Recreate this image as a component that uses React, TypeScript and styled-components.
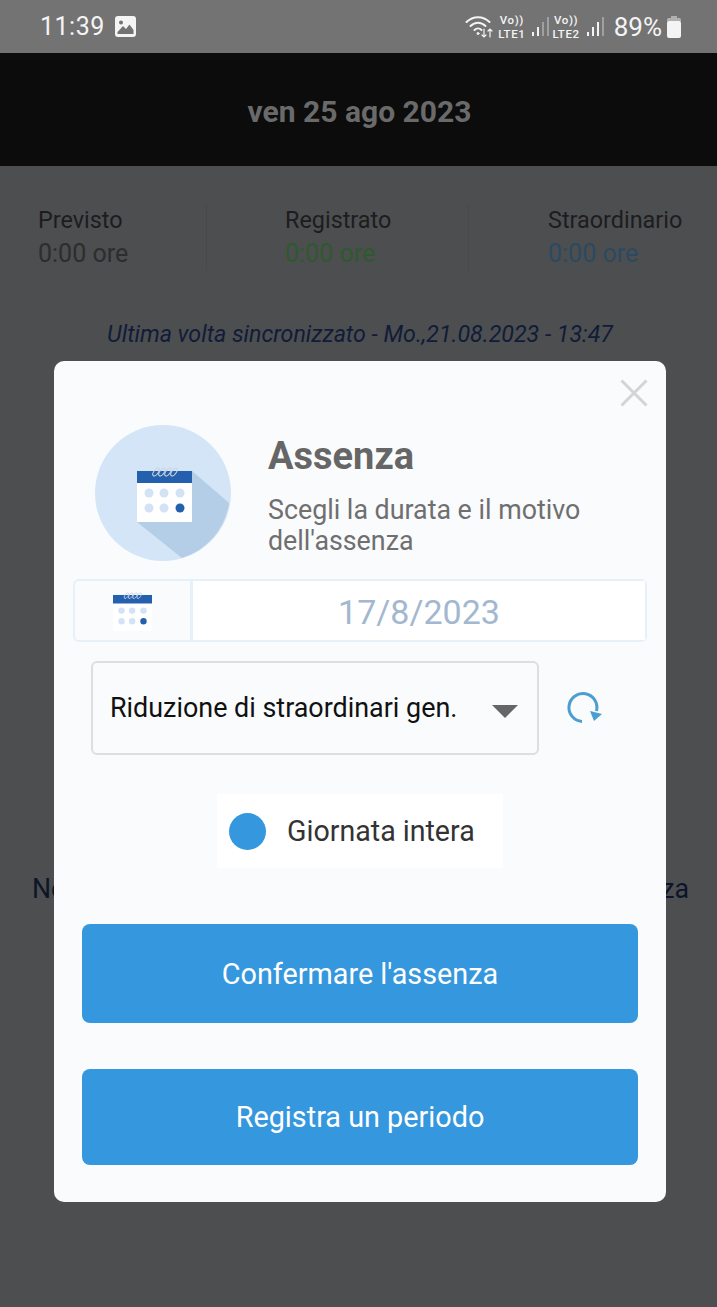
import React from 'react'
import styled, { createGlobalStyle } from 'styled-components'

const GlobalStyle = createGlobalStyle`
  html, body {
    background: #4d4e50;
    font-family: Roboto, 'Liberation Sans', sans-serif;
    margin: 0;
    padding: 0;
  }
`
const Page = styled.div`
  background: #4d4e50;
  height: 1307px;
  overflow: hidden;
  position: relative;
  width: 717px;
`
const StatusBar = styled.div`
  align-items: center;
  background: #737373;
  color: #f4f4f4;
  display: flex;
  height: 53px;
  justify-content: space-between;
  padding: 0 36px 0 40px;
`
const StatusGroup = styled.div`
  align-items: center;
  display: flex;
`
const Clock = styled.span`
  font-size: 25px;
  margin-right: 10px;
  letter-spacing: 0.5px;
`
const NetLabel = styled.span`
  display: flex;
  flex-direction: column;
  font-size: 11.5px;
  font-weight: 500;
  letter-spacing: 0.6px;
  line-height: 14px;
  margin: 0 6px 0 3px;
  text-align: center;
`
const Battery = styled.span`
  font-size: 26px;
  margin: 0 5px 0 10px;
`
const Header = styled.div`
  align-items: center;
  background: #0c0c0c;
  box-sizing: border-box;
  color: #6a6a6a;
  display: flex;
  font-size: 30px;
  font-weight: 700;
  height: 113px;
  justify-content: center;
  padding: 4px 0 0 2px;
`
const Stats = styled.div`
  display: grid;
  grid-template-columns: 206px 262px 249px;
  margin-top: 38px;
`
const Stat = styled.div<{ $inset: number; $divider?: boolean }>`
  border-left: ${(props) => (props.$divider ? '1px solid #484949' : 'none')};
  padding-left: ${(props) => props.$inset}px;
`
const StatLabel = styled.div`
  color: #1c1d1e;
  font-size: 23.4px;
  line-height: 33px;
`
const StatValue = styled.div<{ $tone: string }>`
  color: ${(props) => props.$tone};
  font-size: 25px;
  line-height: 34px;
`
const SyncNote = styled.div`
  color: #101c38;
  font-size: 23.2px;
  font-style: italic;
  margin-top: 49px;
  padding-left: 3px;
  text-align: center;
`
const EmptyNote = styled.div`
  color: #0d1528;
  font-size: 26.75px;
  margin-top: 525px;
  padding-left: 4px;
  text-align: center;
  white-space: nowrap;
`
const Modal = styled.div`
  background: #f9fbfd;
  border-radius: 10px;
  box-sizing: border-box;
  height: 841px;
  left: 54px;
  padding: 18px 19px 0;
  position: absolute;
  top: 361px;
  width: 612px;
`
const CloseRow = styled.div`
  display: flex;
  justify-content: flex-end;
  margin-right: -1px;
`
const Intro = styled.div`
  align-items: flex-start;
  display: flex;
  gap: 37px;
  margin-top: 18px;
  padding-left: 22px;
`
const IntroText = styled.div`
  padding-top: 7px;
`
const Title = styled.div`
  color: #666666;
  font-size: 38px;
  font-weight: 700;
  line-height: 48px;
`
const Subtitle = styled.div`
  color: #6f6f6f;
  font-size: 26.8px;
  line-height: 31px;
  margin-top: 15px;
  width: 340px;
`
const DateRow = styled.div`
  border: 2px solid #e6f0f9;
  border-radius: 6px;
  box-sizing: border-box;
  display: flex;
  height: 63px;
  margin-top: 18px;
  width: 574px;
`
const DateIcon = styled.div`
  align-items: center;
  border-right: 3px solid #e6f0f9;
  display: flex;
  justify-content: center;
  padding-top: 2px;
  width: 115px;
`
const DateValue = styled.div`
  align-items: center;
  background: #ffffff;
  color: #a3b8cf;
  display: flex;
  flex: 1;
  font-size: 34px;
  justify-content: center;
  padding-top: 2px;
`
const ReasonRow = styled.div`
  align-items: center;
  display: flex;
  gap: 27px;
  margin: 19px 0 0 18px;
`
const Select = styled.div`
  align-items: center;
  border: 2px solid #dcdee0;
  border-radius: 6px;
  box-sizing: border-box;
  color: #111111;
  display: flex;
  font-size: 26.9px;
  height: 94px;
  justify-content: space-between;
  padding: 0 19px 0 17px;
  width: 448px;
`
const Caret = styled.span`
  border-left: 13px solid transparent;
  border-right: 13px solid transparent;
  border-top: 13px solid #666666;
  margin-top: 6px;
`
const OptionRow = styled.div`
  display: flex;
  justify-content: center;
  margin-top: 39px;
`
const Option = styled.div`
  align-items: center;
  background: #ffffff;
  box-sizing: border-box;
  color: #333333;
  display: flex;
  font-size: 28.6px;
  gap: 21px;
  height: 74px;
  padding-left: 12px;
  width: 286px;
`
const RadioDot = styled.span`
  background: #3597dd;
  border-radius: 50%;
  height: 37px;
  width: 37px;
`
const Actions = styled.div`
  display: flex;
  flex-direction: column;
  margin: 56px 0 0 9px;
`
const ActionButton = styled.button<{ $height: number; $gap?: number }>`
  background: #3597dd;
  border: none;
  border-radius: 8px;
  color: #ffffff;
  font-family: inherit;
  font-size: 28.8px;
  height: ${(props) => props.$height}px;
  margin-top: ${(props) => props.$gap ?? 0}px;
  width: 556px;
`

function CalendarGlyph({ x = 0, y = 0 }: { x?: number; y?: number }) {
  const dots = [
    [12, 26, '#d3e2f4'],
    [27, 26, '#d3e2f4'],
    [43, 26, '#d3e2f4'],
    [12, 41, '#d3e2f4'],
    [27, 41, '#d3e2f4'],
    [43, 41, '#2560ae'],
  ] as const
  return (
    <g transform={`translate(${x} ${y})`}>
      <rect y="4" width="55" height="51" fill="#ffffff" />
      <rect y="4" width="55" height="12" fill="#2560ae" />
      {[19, 25, 31, 37].map((cx) => (
        <ellipse
          key={cx}
          cx={cx}
          cy="5"
          rx="2.2"
          ry="4.6"
          fill="none"
          stroke="#ccd5e1"
          strokeWidth="1.1"
          transform={`rotate(35 ${cx} 5)`}
        />
      ))}
      {dots.map(([cx, cy, fill]) => (
        <circle key={`${cx}-${cy}`} cx={cx} cy={cy} r="4.5" fill={fill} />
      ))}
    </g>
  )
}

function SignalBars({ active }: { active: number }) {
  return (
    <svg width="18" height="22" viewBox="0 0 18 22">
      {[0, 1, 2, 3].map((i) => (
        <rect
          key={i}
          x={1 + i * 5}
          y={16 - i * 5}
          width="2"
          height={4 + i * 5}
          fill={i < active ? '#f4f4f4' : '#a0a0a0'}
        />
      ))}
    </svg>
  )
}

export default function App() {
  return (
    <Page>
      <GlobalStyle />
      <StatusBar>
        <StatusGroup>
          <Clock>11:39</Clock>
          <svg width="21" height="21" viewBox="0 0 21 21">
            <rect width="21" height="21" rx="3" fill="#f4f4f4" />
            <circle cx="6" cy="6.5" r="2" fill="#737373" />
            <path d="M2.5 16 L8 10 L11 13 L14.5 8.5 L18.5 14 V18 H2.5 Z" fill="#737373" />
          </svg>
        </StatusGroup>
        <StatusGroup>
          <svg width="30" height="24" viewBox="0 0 30 24" fill="none" stroke="#f4f4f4" strokeLinecap="round">
            <path d="M1.5 7 C8 0.5 18 0.5 24.5 7" strokeWidth="2" />
            <path d="M5.5 11 C10 6.5 16 6.5 20.5 11" strokeWidth="2" />
            <path d="M9.5 15 C11.5 13 14.5 13 16.5 15" strokeWidth="2" />
            <circle cx="13" cy="18.5" r="1" fill="#f4f4f4" strokeWidth="1" />
            <path d="M19 14 V22 M17 20 L19 22 L21 20 M25 22 V14 M23 16 L25 14 L27 16" strokeWidth="1.2" />
          </svg>
          <NetLabel>
            <span>Vo))</span>
            <span>LTE1</span>
          </NetLabel>
          <SignalBars active={2} />
          <NetLabel>
            <span>Vo))</span>
            <span>LTE2</span>
          </NetLabel>
          <SignalBars active={3} />
          <Battery>89%</Battery>
          <svg width="14" height="22" viewBox="0 0 14 22">
            <rect x="4" y="0" width="6" height="3" fill="#b0b0b0" />
            <rect x="0" y="2" width="14" height="4" rx="1.5" fill="#b0b0b0" />
            <rect x="0" y="5" width="14" height="17" rx="2" fill="#f4f4f4" />
          </svg>
        </StatusGroup>
      </StatusBar>
      <Header>ven 25 ago 2023</Header>
      <Stats>
        <Stat $inset={38}>
          <StatLabel>Previsto</StatLabel>
          <StatValue $tone="#2c2d2e">0:00 ore</StatValue>
        </Stat>
        <Stat $inset={78} $divider>
          <StatLabel>Registrato</StatLabel>
          <StatValue $tone="#2d5a2d">0:00 ore</StatValue>
        </Stat>
        <Stat $inset={79} $divider>
          <StatLabel>Straordinario</StatLabel>
          <StatValue $tone="#2a4a62">0:00 ore</StatValue>
        </Stat>
      </Stats>
      <SyncNote>Ultima volta sincronizzato - Mo.,21.08.2023 - 13:47</SyncNote>
      <EmptyNote>Nessun dato disponibile per la presenza o per l'assenza</EmptyNote>

      <Modal>
        <CloseRow>
          <svg width="28" height="28" viewBox="0 0 28 28" stroke="#d2d4d6" strokeWidth="3">
            <path d="M1.5 1.5 L26.5 26.5 M26.5 1.5 L1.5 26.5" />
          </svg>
        </CloseRow>
        <Intro>
          <svg width="136" height="136" viewBox="0 0 136 136">
            <circle cx="68" cy="68" r="68" fill="#d3e5f6" />
            <path d="M97 46 L134 78 A68 68 0 0 1 87 133 L42 97 Z" fill="#b3cee6" />
            <CalendarGlyph x={42} y={42} />
          </svg>
          <IntroText>
            <Title>Assenza</Title>
            <Subtitle>Scegli la durata e il motivo dell'assenza</Subtitle>
          </IntroText>
        </Intro>
        <DateRow>
          <DateIcon>
            <svg width="39" height="40" viewBox="0 0 55 56">
              <CalendarGlyph />
            </svg>
          </DateIcon>
          <DateValue>17/8/2023</DateValue>
        </DateRow>
        <ReasonRow>
          <Select>
            Riduzione di straordinari gen.
            <Caret />
          </Select>
          <svg width="36" height="36" viewBox="0 0 36 36" fill="none">
            <path d="M16 31.5 A14 14 0 1 1 30.5 21" stroke="#4a9fd0" strokeWidth="3" />
            <path d="M24 21 L36 24 L28 31 Z" fill="#4a9fd0" />
          </svg>
        </ReasonRow>
        <OptionRow>
          <Option>
            <RadioDot />
            Giornata intera
          </Option>
        </OptionRow>
        <Actions>
          <ActionButton $height={99}>Confermare l'assenza</ActionButton>
          <ActionButton $height={96} $gap={46}>
            Registra un periodo
          </ActionButton>
        </Actions>
      </Modal>
    </Page>
  )
}
